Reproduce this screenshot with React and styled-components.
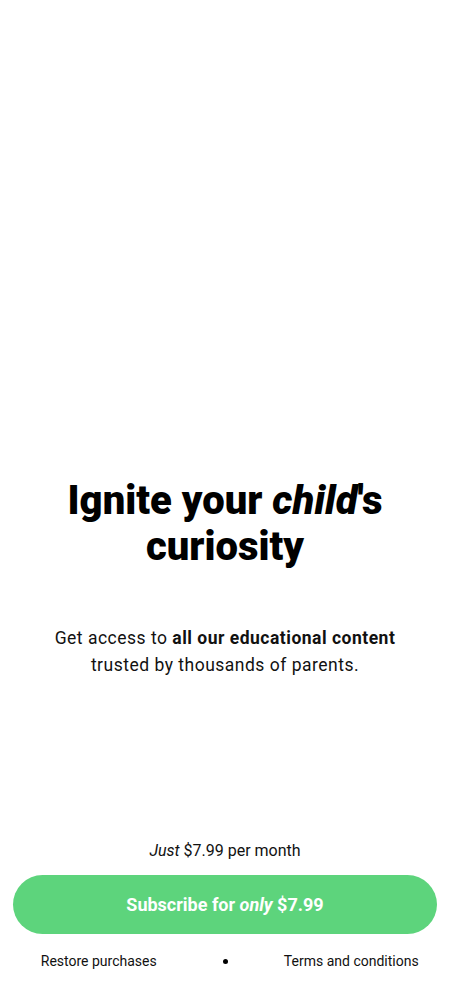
import React from 'react'
import styled, { createGlobalStyle } from 'styled-components'

const GlobalStyle = createGlobalStyle`
    html, body {
        margin: 0;
        padding: 0;
        background: #fff;
    }
    body {
        font-family: Roboto, 'Noto Sans', sans-serif;
        color: #000;
    }
`

function App() {
    return <Page>
        <GlobalStyle />
        <Hero>
            <Title>Ignite your <em>child</em>'s<br />curiosity</Title>
            <Subtitle>
                Get access to <b>all our educational content</b><br />
                trusted by thousands of parents.
            </Subtitle>
        </Hero>
        <Bottom>
            <Price><em>Just</em> $7.99 per month</Price>
            <SubscribeButton>Subscribe for <em>only</em> $7.99</SubscribeButton>
            <Footer>
                <FooterLink>Restore purchases</FooterLink>
                <Dot />
                <FooterLink>Terms and conditions</FooterLink>
            </Footer>
        </Bottom>
    </Page>
}

export default App

const Page = styled.div`
    display: flex;
    flex-direction: column;
    height: 1000px;
    box-sizing: border-box;
`
const Hero = styled.div`
    flex: 1;
    display: flex;
    flex-direction: column;
    justify-content: flex-end;
    align-items: center;
    padding-bottom: 162px;
`
const Title = styled.h1`
    margin: 0;
    font-size: 40px;
    line-height: 46px;
    font-weight: 900;
    text-align: center;
    em {
        font-style: italic;
    }
`
const Subtitle = styled.p`
    margin: 55px 0 0;
    font-size: 17.5px;
    line-height: 27px;
    letter-spacing: 0.5px;
    text-align: center;
    color: #111;
    b {
        font-weight: 700;
    }
`
const Bottom = styled.div`
    display: flex;
    flex-direction: column;
    align-items: stretch;
    padding: 0 13px 30px;
`
const Price = styled.div`
    text-align: center;
    font-size: 16px;
    line-height: 20px;
    color: #111;
`
const SubscribeButton = styled.button`
    margin-top: 14px;
    height: 59px;
    border: none;
    border-radius: 30px;
    background: #5dd47c;
    color: #fff;
    font-family: Roboto, sans-serif;
    font-size: 18px;
    font-weight: 700;
    cursor: pointer;
`
const Footer = styled.div`
    display: flex;
    align-items: center;
    margin: 18px -13px 0;
    height: 18px;
`
const FooterLink = styled.span`
    flex: 1;
    text-align: center;
    font-size: 14px;
    color: #111;
`
const Dot = styled.span`
    width: 5px;
    height: 5px;
    margin: 0 25px;
    border-radius: 50%;
    background: #000;
`
